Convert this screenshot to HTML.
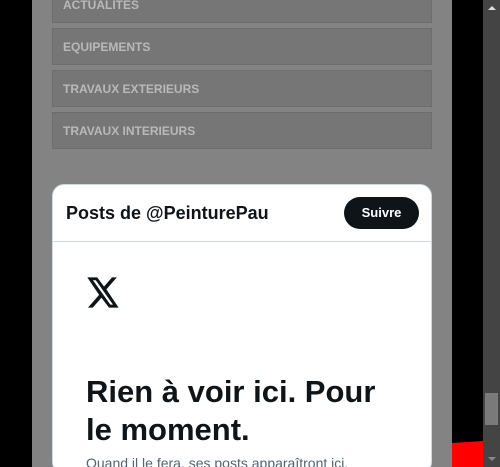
<!DOCTYPE html>
<html style="height:467px;overflow:hidden"><head><meta charset="utf-8"><style>
*{margin:0;padding:0;box-sizing:border-box}
body{width:500px;height:467px;overflow:hidden;background:#000;position:relative;font-family:"Liberation Sans",sans-serif}
.panel{position:absolute;left:32px;top:0;width:420px;height:467px;background:#838383}
.item{position:absolute;left:52px;width:380px;height:37px;background:#767676;border:1px solid #6e6e6e;color:#b9b9b9;font-size:12px;font-weight:bold;padding-left:10px;line-height:36px}
.sb{position:absolute;left:483px;top:0;width:17px;height:467px;background:#444}
.thumb{position:absolute;left:485px;top:393px;width:13px;height:32px;background:#7a7a7a}
.card{position:absolute;left:52px;top:184px;width:380px;height:290px;background:#fff;border:1px solid #cfd9de;border-radius:12px;overflow:hidden}
.hd{height:57px;border-bottom:1px solid #cfd9de;position:relative}
.t{position:absolute;left:13px;top:18px;font-size:18px;font-weight:bold;color:#0f1419}
.btn{position:absolute;left:291px;top:12px;width:75px;height:32px;border-radius:16px;background:#0f1419;color:#fff;font-size:13px;font-weight:bold;text-align:center;line-height:32px}
h1{position:absolute;left:33px;top:188px;font-size:31px;line-height:38px;color:#0f1419;font-weight:bold;width:300px}
.s{position:absolute;left:33px;top:270px;font-size:14px;color:#536471;white-space:nowrap}
</style></head><body>
<div class="panel"></div>
<div class="item" style="top:-14px">ACTUALITES</div>
<div class="item" style="top:28px">EQUIPEMENTS</div>
<div class="item" style="top:70px">TRAVAUX EXTERIEURS</div>
<div class="item" style="top:112px">TRAVAUX INTERIEURS</div>
<div class="card">
<div class="hd"><div class="t">Posts de @PeinturePau</div><div class="btn">Suivre</div></div>
<svg style="position:absolute;left:34px;top:92px" width="33" height="31" viewBox="0 0 24 22"><path d="M18.2 0h3.5l-7.6 8.7L23 22h-7l-5.5-7.2L4.2 22H.7l8.1-9.3L.2 0h7.2l5 6.6zM17 19.8h1.9L6.4 2.1H4.3z" fill="#0f1419"/></svg>
<h1>Rien à voir ici. Pour le moment.</h1>
<div class="s">Quand il le fera, ses posts apparaîtront ici.</div>
</div>
<svg style="position:absolute;left:452px;top:440px" width="31" height="27"><polygon points="0,3 31,1 31,27 0,27" fill="#f00"/></svg>
<div class="sb"></div><div class="thumb"></div>
<div style="position:absolute;left:488px;top:6px;border:4px solid transparent;border-bottom:4px solid #ddd;border-top:0;width:0"></div>
<div style="position:absolute;left:488px;top:457px;border:4px solid transparent;border-top:4px solid #888;border-bottom:0;width:0"></div>
</body></html>
